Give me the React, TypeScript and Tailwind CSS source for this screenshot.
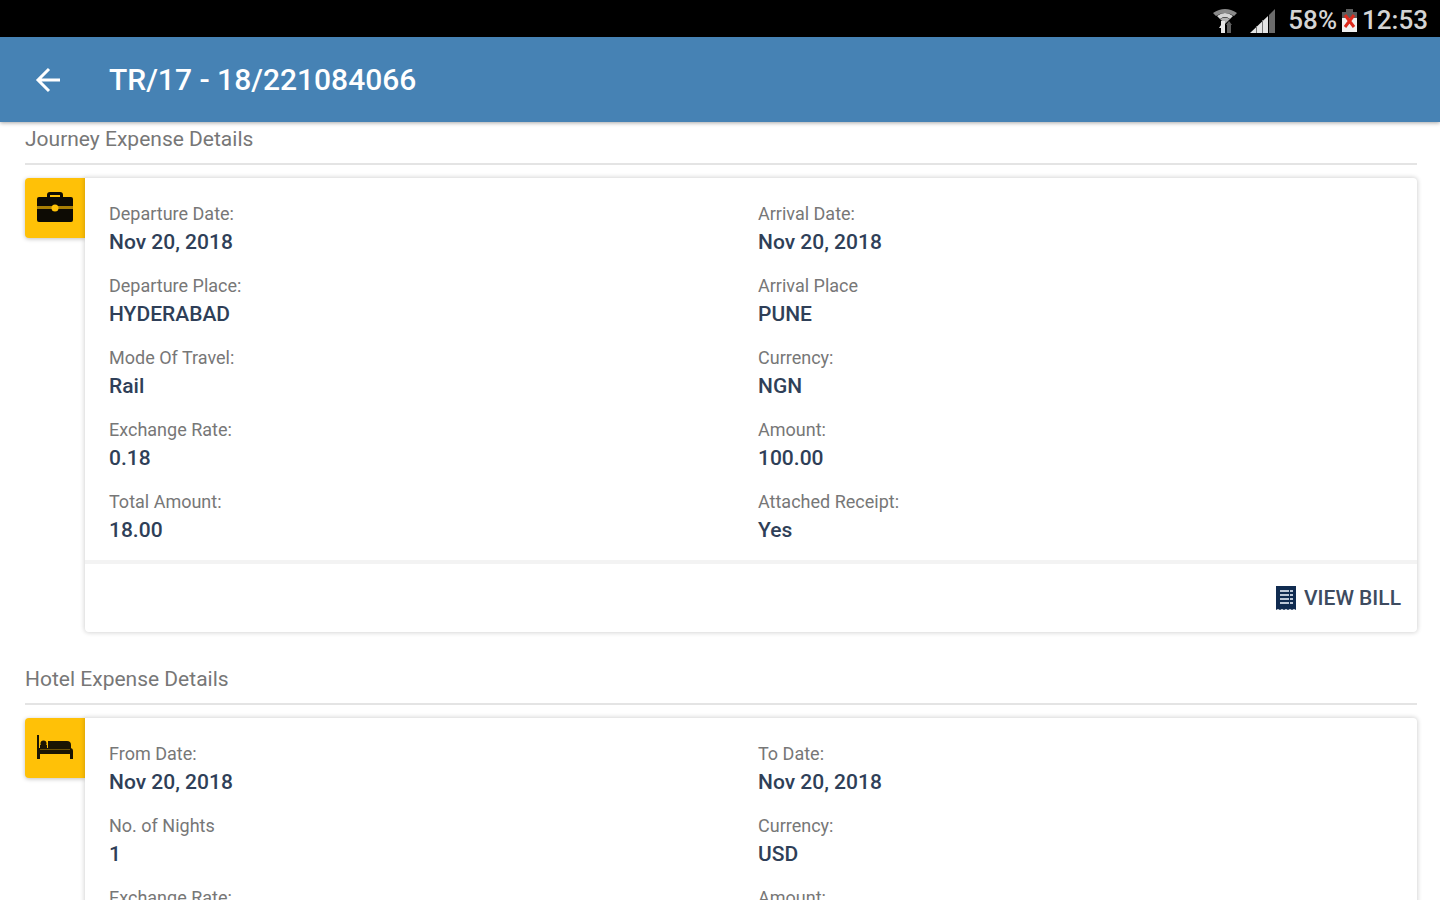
import type { ReactNode } from "react";

type Field = { label: string; value?: string };

const journey: Field[] = [
  { label: "Departure Date:", value: "Nov 20, 2018" },
  { label: "Arrival Date:", value: "Nov 20, 2018" },
  { label: "Departure Place:", value: "HYDERABAD" },
  { label: "Arrival Place", value: "PUNE" },
  { label: "Mode Of Travel:", value: "Rail" },
  { label: "Currency:", value: "NGN" },
  { label: "Exchange Rate:", value: "0.18" },
  { label: "Amount:", value: "100.00" },
  { label: "Total Amount:", value: "18.00" },
  { label: "Attached Receipt:", value: "Yes" },
];

const hotel: Field[] = [
  { label: "From Date:", value: "Nov 20, 2018" },
  { label: "To Date:", value: "Nov 20, 2018" },
  { label: "No. of Nights", value: "1" },
  { label: "Currency:", value: "USD" },
  { label: "Exchange Rate:" },
  { label: "Amount:" },
];

function WifiIcon() {
  return (
    <svg width="26" height="28" viewBox="0 0 26 28" fill="none" aria-hidden="true">
      <path d="M1 6Q13-2 25 6L22 9Q13 3 4 9z" fill="#8a8a8a" />
      <path d="M5 9Q13 3 21 9L18 12Q13 8 8 12z" fill="#d4d4d4" />
      <path d="M8 12Q13 9 18 12L13 17Z" fill="#b0b0b0" />
      <path d="M9 14h4v12H9V21H7l2-3z" fill="#e8e8e8" />
      <path d="M15 26V18h-1l3-4 3 4h-1v8z" fill="#606060" />
    </svg>
  );
}

function SignalIcon() {
  return (
    <svg width="26" height="26" viewBox="0 0 26 26" aria-hidden="true">
      <path d="M0 25L18 8V25Z" fill="#e5e5e5" />
      <path d="M19 7L25 1V25H19Z" fill="#6b6b6b" />
      <path d="M6.500 18V25M12.500 12V25" stroke="#777" strokeWidth="1" />
    </svg>
  );
}

function BatteryIcon() {
  return (
    <svg width="17" height="24" viewBox="0 0 17 24" aria-hidden="true">
      <path d="M5 0h7v3h4v7H1V3h4z" fill="#5c5c5c" />
      <path d="M1 9h15v14H1z" fill="#f1f1f1" />
      <path d="M4 6l9 12M13 6L4 18" stroke="#dc2a1c" strokeWidth="3" />
    </svg>
  );
}

function BriefcaseIcon() {
  return (
    <svg width="36" height="32" viewBox="0 0 36 32" fill="#0d0b04" aria-hidden="true">
      <path d="M10 5V3q0-3 3-3h10q3 0 3 3v2h8q2 0 2 2v7H0V7q0-2 2-2zM13 5h10V3H13z" fillRule="evenodd" />
      <path d="M0 17h36v11q0 2-2 2H2q-2 0-2-2z" />
      <path d="M0 14h36v3H0z" fill="#a87e04" />
      <circle cx="18" cy="16" r="3.500" fill="#ffc107" />
    </svg>
  );
}

function BedIcon() {
  return (
    <svg width="38" height="28" viewBox="0 0 38 28" fill="#1a1503" aria-hidden="true">
      <path d="M1 1h2v13h31q3 0 3 3v8h-3v-5H4v5H1z" />
      <circle cx="7.500" cy="9.500" r="3" />
      <path d="M4 11h7v4H4zM12 7h19q4 0 4 4v4H12z" />
      <path d="M4 15.500h30" stroke="#6b5105" strokeWidth="1" />
    </svg>
  );
}

function BillIcon() {
  return (
    <svg width="20" height="24" viewBox="0 0 20 24" aria-hidden="true">
      <path d="M0 0h20v24l-2-1-2 1-2-1-2 1-2-1-2 1-2-1-2 1-2-1-2 1z" fill="#102b50" />
      <path d="M4 5h13M4 9h13M4 13h13M4 17h13" stroke="#bcc7d6" strokeWidth="2" />
      <path d="M13.500 4v14" stroke="#102b50" strokeWidth="1" />
    </svg>
  );
}

function ExpenseSection({
  title,
  icon,
  fields,
  footer,
}: {
  title: string;
  icon: ReactNode;
  fields: Field[];
  footer?: ReactNode;
}) {
  return (
    <section>
      <h2 className="border-b-2 border-[#e4e4e4] pb-[10px] text-[21px] leading-7 text-[#777777]">{title}</h2>
      <div className="mt-[13px] flex items-start">
        <div className="flex size-[60px] shrink-0 items-center justify-center rounded-l-sm bg-[#ffc107] shadow-[0_1px_4px_rgba(0,0,0,0.25)]">
          {icon}
        </div>
        <div className="min-w-0 flex-1 rounded-sm rounded-tl-none bg-white shadow-[0_0_4px_1px_rgba(0,0,0,0.16)]">
          <dl className="grid grid-cols-2 gap-x-[14px] gap-y-4 px-6 pt-[22px] pb-4">
            {fields.map((field) => (
              <div key={field.label}>
                <dt className="text-lg leading-7 text-[#777777]">{field.label}</dt>
                <dd className="min-h-7 text-[21px] leading-7 font-medium text-[#2f3f58]">{field.value}</dd>
              </div>
            ))}
          </dl>
          {footer}
        </div>
      </div>
    </section>
  );
}

export default function App() {
  return (
    <div className="flex h-screen flex-col overflow-hidden bg-white font-['Roboto',sans-serif]">
      <div className="flex h-[37px] shrink-0 items-center justify-end bg-black pr-3 pt-1 text-[26px] font-medium text-[#d4d4d4]">
        <WifiIcon />
        <span className="ml-3">
          <SignalIcon />
        </span>
        <span className="ml-3">58%</span>
        <span className="ml-1">
          <BatteryIcon />
        </span>
        <span className="ml-1">12:53</span>
      </div>
      <header className="z-10 flex h-[85px] shrink-0 items-center bg-[#4682b4] px-6 text-white shadow-[0_1px_4px_rgba(0,0,0,0.35)]">
        <button type="button" aria-label="Back" className="flex size-12 items-center justify-center">
          <svg width="26" height="26" viewBox="0 0 26 26" fill="none" stroke="currentColor" strokeWidth="3" aria-hidden="true">
            <path d="M25 13H3M14 2L3 13L14 24" />
          </svg>
        </button>
        <h1 className="ml-[37px] text-[30px] leading-9 font-medium">TR/17 - 18/221084066</h1>
      </header>
      <main className="flex min-h-0 flex-1 flex-col gap-[33px] overflow-hidden pt-[3px] pr-[23px] pl-[25px]">
        <ExpenseSection
          title="Journey Expense Details"
          icon={<BriefcaseIcon />}
          fields={journey}
          footer={
            <div className="flex justify-end border-t-4 border-[#f3f3f3] px-4 py-4">
              <button type="button" className="flex items-center gap-2 text-[21px] leading-9 font-medium text-[#3d4b60]">
                <BillIcon />
                VIEW BILL
              </button>
            </div>
          }
        />
        <ExpenseSection title="Hotel Expense Details" icon={<BedIcon />} fields={hotel} />
      </main>
    </div>
  );
}
